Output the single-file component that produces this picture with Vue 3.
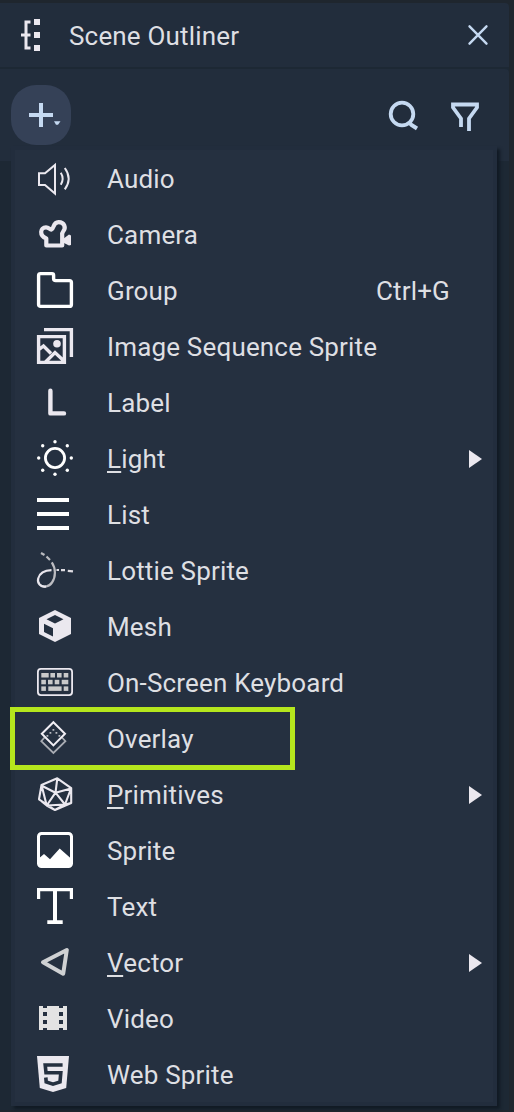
<script setup>
const items = [
  { id: 'audio', label: 'Audio' },
  { id: 'camera', label: 'Camera' },
  { id: 'group', label: 'Group', shortcut: 'Ctrl+G' },
  { id: 'sequence', label: 'Image Sequence Sprite' },
  { id: 'label', label: 'Label' },
  { id: 'light', key: 'L', label: 'ight', submenu: true },
  { id: 'list', label: 'List' },
  { id: 'lottie', label: 'Lottie Sprite' },
  { id: 'mesh', label: 'Mesh' },
  { id: 'keyboard', label: 'On-Screen Keyboard' },
  { id: 'overlay', label: 'Overlay', marked: true },
  { id: 'primitives', key: 'P', label: 'rimitives', submenu: true },
  { id: 'sprite', label: 'Sprite' },
  { id: 'text', label: 'Text' },
  { id: 'vector', key: 'V', label: 'ector', submenu: true },
  { id: 'video', label: 'Video' },
  { id: 'web', label: 'Web Sprite' },
]
const rays = [[20, 3.7], [32.3, 7.7], [36.3, 20], [32.3, 32.3], [20, 36.3], [7.7, 32.3], [3.7, 20], [7.7, 7.7]]
const keys = [
  [6.3, 11, 7.4], [15.4, 11, 4.6], [22, 11, 4.6], [28.7, 11, 4.6],
  [6.3, 17.8, 4.6], [13, 17.8, 4.6], [19.7, 17.8, 4.6], [26.7, 17.8, 6.6],
  [6.3, 24.4, 4.6], [13.3, 24.4, 13.3], [28.7, 24.4, 4.6],
]
</script>

<template>
  <div class="panel">
    <header class="titlebar">
      <svg class="logo" width="40" height="40" viewBox="0 0 40 40">
        <path d="M19.5 7H15V33H19.5M10 20H19.5" fill="none" stroke="#ebe8ef" stroke-width="3" />
        <path d="M23 4h6v6h-6zM23 17h6v6h-6zM23 30h6v6h-6z" fill="#ebe8ef" />
      </svg>
      <h1>Scene Outliner</h1>
      <svg class="close" width="24" height="24" viewBox="0 0 24 24">
        <path d="M3.5 3.3L20.5 20.7M20.5 3.3L3.5 20.7" stroke="#c5d9f1" stroke-width="2.4" stroke-linecap="round" />
      </svg>
    </header>

    <div class="toolbar">
      <button class="add">
        <svg width="60" height="60" viewBox="0 0 60 60">
          <path d="M18 30H42M30 18V42" stroke="#c5d9f1" stroke-width="4" />
          <path d="M43 36.3H49.5L47 39.8H45z" fill="#c5d9f1" />
        </svg>
      </button>
      <svg class="tool" width="32" height="32" viewBox="0 0 32 32" fill="none" stroke="#c5d9f1">
        <circle cx="15" cy="15" r="11.3" stroke-width="3.8" />
        <path d="M22 23L24.5 26L30 29.5" stroke-width="4" />
      </svg>
      <svg class="tool filter" width="32" height="32" viewBox="0 0 32 32" fill="none" stroke="#c5d9f1" stroke-width="3.8">
        <path d="M12 28V19.5L4 8.5V5.5H28V8.5L20 19.5V32" />
      </svg>
    </div>

    <nav class="menu">
      <div v-for="item in items" :key="item.id" class="row" :class="{ marked: item.marked }">
        <svg class="icon" width="40" height="40" viewBox="0 0 40 40" fill="none">
          <g v-if="item.id === 'audio'" stroke="#ebe8ef" stroke-width="2">
            <path d="M4 15.3H10L20 7V35.5L10 27H4z" />
            <path d="M25.8 14.8Q29.5 20.8 25.8 26.8M29.8 10Q37.5 20.5 29.8 31.4" />
          </g>
          <g v-else-if="item.id === 'camera'">
            <path d="M11.3 31.5V24.5C4 21.5 5 13.3 11 13.3C14 13.3 14.8 16 16.5 15.5C19.3 14.7 17.5 8.3 23.6 8.1C29.5 8 31.2 14 28.2 17.3C26.8 18.8 27 20.3 27.2 22V31.5z" stroke="#ebe8ef" stroke-width="4.2" stroke-linejoin="round" />
            <path d="M28 25L34 20.6L36 21.6V31L34 31.6L28 28.5z" fill="#ebe8ef" />
          </g>
          <path v-else-if="item.id === 'group'" d="M5.5 3.6H17Q18.6 3.6 18.6 5.2V8.5Q18.6 10.6 20.7 10.6H34.5Q36.4 10.6 36.4 12.5V34.4Q36.4 36.4 34.4 36.4H5.6Q3.6 36.4 3.6 34.4V5.5Q3.6 3.6 5.5 3.6z" stroke="#fff" stroke-width="3.4" />
          <g v-else-if="item.id === 'sequence'" stroke="#ebe8ef" stroke-width="3.4">
            <path d="M9 3.6H36.4V31M3.6 10.6H29.4V36.4H3.6zM4 23.5L8.5 20L16 27.5M10.5 36L20 26.5L29.5 35.5" />
            <circle cx="22" cy="17.7" r="3.8" fill="#ebe8ef" stroke="none" />
          </g>
          <path v-else-if="item.id === 'label'" d="M15.4 8.8V31.4H29" stroke="#ebe8ef" stroke-width="4.4" stroke-linecap="round" stroke-linejoin="round" />
          <g v-else-if="item.id === 'light'">
            <circle cx="20" cy="20" r="9.6" stroke="#fff" stroke-width="2.8" />
            <circle v-for="(r, i) in rays" :key="i" :cx="r[0]" :cy="r[1]" r="1.7" fill="#fff" />
          </g>
          <path v-else-if="item.id === 'list'" d="M2 6H34M2 20H34M2 34H34" stroke="#fff" stroke-width="4" />
          <g v-else-if="item.id === 'lottie'" stroke-width="2.2">
            <path d="M6 3L9.5 5M11.5 6.5L15 10" stroke="#b9babf" />
            <path d="M16.8 12.3C21 18.5 20.8 27 17 32.5C14 37 8 37.8 5 35" stroke="#bcbcc1" />
            <path d="M11 36.4C5.5 37.6 2 33 3.2 28.5C4.7 23 10 20.4 16.5 20.2" stroke="#e8e5ec" />
            <path d="M21.5 20H24M26 20.2H30M32.8 20.8L38 21.4" stroke="#dddbe1" />
          </g>
          <path v-else-if="item.id === 'mesh'" fill-rule="evenodd" fill="#ebe8ef" d="M20 4L36 12V28L20 36L4 28V12zM20 9L28.5 13.2L20 17.5L11.5 13.2zM9 17.7L18 22.3V30.6L9 26z" />
          <g v-else-if="item.id === 'keyboard'">
            <rect x="2.9" y="6.9" width="34.2" height="26.2" rx="3" stroke="#ebe8ef" stroke-width="1.8" />
            <rect v-for="(k, i) in keys" :key="i" :x="k[0]" :y="k[1]" :width="k[2]" height="4.5" fill="#c9c9c9" />
          </g>
          <g v-else-if="item.id === 'overlay'">
            <path d="M9.5 19.5L6.3 23.2L18.4 35L30.4 23.2L27 19.5" stroke="#a9acb3" stroke-width="1.8" />
            <path d="M18.4 4.2L30 15.8L18.4 27.4L6.8 15.8z" stroke="#f2eff5" stroke-width="2" />
            <path d="M17.5 11h1.8v1.8h-1.8zM14.5 14h1.8v1.8h-1.8zM20.5 14h1.8v1.8h-1.8zM11.5 17h1.8v1.8h-1.8zM23.5 17h1.8v1.8h-1.8z" fill="#b9bbc1" />
          </g>
          <path v-else-if="item.id === 'primitives'" stroke="#ebe8ef" stroke-width="2.1" stroke-linejoin="round" d="M22.3 4.3L36.2 14.2V29L20 36L4 25.3L6.5 11zM20.5 18.7L22.3 4.3M20.5 18.7L36 14.5M20.5 18.7L6.8 11.8M20.5 18.7L11.7 31.5L30 30.5zM6.5 11L11.7 31.5M36 14.5L30 30.5M4 25.3L11.7 31.5L20 36L30 30.5L36 29" />
          <g v-else-if="item.id === 'sprite'">
            <rect x="3.5" y="3.5" width="33" height="33" rx="3" stroke="#fff" stroke-width="3" />
            <path d="M4 28.2L9 24L15 29.3L24.7 18.5L36 28.5V37H4z" fill="#fff" />
          </g>
          <path v-else-if="item.id === 'text'" fill="#fff" d="M2 2H38V13H34.8V5.2H22V34.3H27.7V38H12.3V34.3H18V5.2H5.2V13H2z" />
          <path v-else-if="item.id === 'vector'" d="M8 20.2L31.8 8L28.2 31.8z" stroke="#cfd1d3" stroke-width="4" stroke-linejoin="round" />
          <path v-else-if="item.id === 'video'" fill-rule="evenodd" fill="#e3e3e3" d="M4 8H8V10H12V8H24V10H28V8H32V32H28V30H24V32H12V30H8V32H4zM8 14V18H12V14zM8 22V26H12V22zM24 14V18H28V14zM24 22V26H28V22z" />
          <g v-else>
            <path d="M2 2H34L31.2 34L18 38L4.8 34z" fill="#ebe8ef" />
            <path d="M27.6 11H10.2L11 18.8H25.8L25 28L18 30.2L11.2 28L10.8 23.5" stroke="#253040" stroke-width="3.6" />
          </g>
        </svg>
        <span class="name"><u v-if="item.key">{{ item.key }}</u>{{ item.label }}</span>
        <span v-if="item.shortcut" class="shortcut">{{ item.shortcut }}</span>
        <svg v-if="item.submenu" class="arrow" width="13" height="18" viewBox="0 0 13 18">
          <path d="M0 0L13 9L0 18z" fill="#ebe8ef" />
        </svg>
      </div>
    </nav>
  </div>
</template>

<style>
body {
  margin: 0;
  background: #1f262e;
}
</style>

<style scoped>
.panel {
  box-sizing: border-box;
  width: 514px;
  height: 1112px;
  padding: 3px 5px 2px 0;
  overflow: hidden;
  background: linear-gradient(#1d2834, #1d2834) 0 64px / 509px 1046px no-repeat #1f262e;
  font-family: Roboto, sans-serif;
  font-size: 26px;
  letter-spacing: 0.17px;
  color: #dedfe3;
}
.titlebar {
  display: flex;
  align-items: center;
  height: 64px;
  margin-bottom: 2px;
  padding: 0 19px 0 11px;
  box-sizing: border-box;
  background: #222d3c;
  border-radius: 0 4px 0 0;
}
h1 {
  flex: 1;
  margin: 2px 0 0 18px;
  font-size: 26px;
  font-weight: 400;
}
.toolbar {
  display: flex;
  align-items: center;
  height: 92px;
  padding: 0 28px 0 11px;
  box-sizing: border-box;
  background: #222d3c;
  border-radius: 0 4px 0 0;
}
.add {
  width: 60px;
  height: 60px;
  margin-right: auto;
  padding: 0;
  border: 0;
  border-radius: 25px;
  background: #354157;
}
.add svg {
  display: block;
}
.filter {
  margin-left: 30px;
}
.menu {
  position: relative;
  width: 478px;
  margin: -15px 0 0 11px;
  border: 4px solid #222d3d;
  background: #253040;
  box-shadow: 3px 3px 3px #111a24;
}
.row {
  position: relative;
  display: flex;
  align-items: center;
  height: 56px;
  padding: 0 11px 0 20px;
}
.icon {
  flex: none;
  margin-right: 32px;
}
.name {
  flex: 1;
  white-space: nowrap;
  padding-top: 1px;
}
u {
  text-decoration-thickness: 2px;
  text-underline-offset: 3px;
}
.shortcut {
  margin-right: 32px;
  padding-top: 1px;
}
.arrow {
  margin-top: 2px;
}
.marked::before {
  content: '';
  position: absolute;
  box-sizing: border-box;
  left: -5px;
  top: -3px;
  width: 285px;
  height: 63px;
  border: 5px solid #b5e61d;
}
</style>
